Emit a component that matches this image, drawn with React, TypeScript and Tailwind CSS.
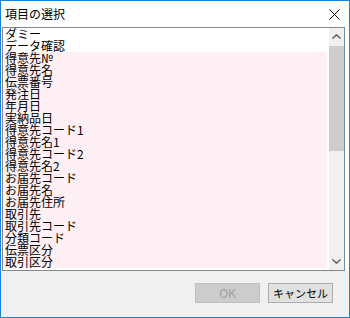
const items = [
  'ダミー',
  'データ確認',
  '得意先№',
  '得意先名',
  '伝票番号',
  '発注日',
  '年月日',
  '実納品日',
  '得意先コード1',
  '得意先名1',
  '得意先コード2',
  '得意先名2',
  'お届先コード',
  'お届先名',
  'お届先住所',
  '取引先',
  '取引先コード',
  '分類コード',
  '伝票区分',
  '取引区分',
];

const font = { fontFamily: '"Noto Sans CJK JP", "Noto Sans", sans-serif' };

const App = () => {
  return (
    <div
      className="w-[350px] h-[318px] border border-[#1883d7] bg-white flex flex-col text-black"
      style={font}
    >
      {/* title bar */}
      <div className="h-[26px] flex items-center justify-between pl-[4px] pr-[8px]">
        <span className="text-[12px] leading-none">項目の選択</span>
        <svg width="11" height="11" viewBox="0 0 11 11" className="mr-[1px]">
          <path d="M0.5 0.5 L10.5 10.5 M10.5 0.5 L0.5 10.5" stroke="#000" strokeWidth="1" />
        </svg>
      </div>

      {/* list box */}
      <div className="ml-[1px] mr-[4px] h-[244px] border border-[#828790] flex">
        <div className="flex-1 overflow-hidden">
          {items.map((item, i) => (
            <div
              key={item}
              className={`h-[12px] pl-[2px] text-[12px] leading-[12px] whitespace-nowrap ${
                i >= 2 ? 'bg-[#fff0f5]' : 'bg-white'
              }`}
            >
              {item}
            </div>
          ))}
        </div>
        <div className="w-[2px] bg-white" />
        <div className="w-[15px] bg-[#f0f0f0] flex flex-col">
          <div className="h-[17px] flex items-center justify-center">
            <svg width="9" height="5" viewBox="0 0 9 5">
              <path d="M0.5 4.5 L4.5 0.8 L8.5 4.5" stroke="#606060" strokeWidth="1.5" fill="none" />
            </svg>
          </div>
          <div className="h-[105px] mt-[1px] bg-[#cdcdcd]" />
          <div className="flex-1" />
          <div className="h-[17px] flex items-center justify-center">
            <svg width="9" height="5" viewBox="0 0 9 5">
              <path d="M0.5 0.5 L4.5 4.2 L8.5 0.5" stroke="#606060" strokeWidth="1.5" fill="none" />
            </svg>
          </div>
        </div>
      </div>

      {/* button area */}
      <div className="flex-1 bg-[#f0f0f0] flex justify-end items-start pt-[12px] pr-[16px] gap-[8px]">
        <button className="w-[65px] h-[20px] bg-[#cccccc] border border-[#bfbfbf] text-[12px] leading-none text-[#a0a0a0]">
          OK
        </button>
        <button className="w-[65px] h-[20px] bg-[#e1e1e1] border border-[#adadad] text-[11px] leading-none text-black">
          キャンセル
        </button>
      </div>
    </div>
  );
};

export default App;
